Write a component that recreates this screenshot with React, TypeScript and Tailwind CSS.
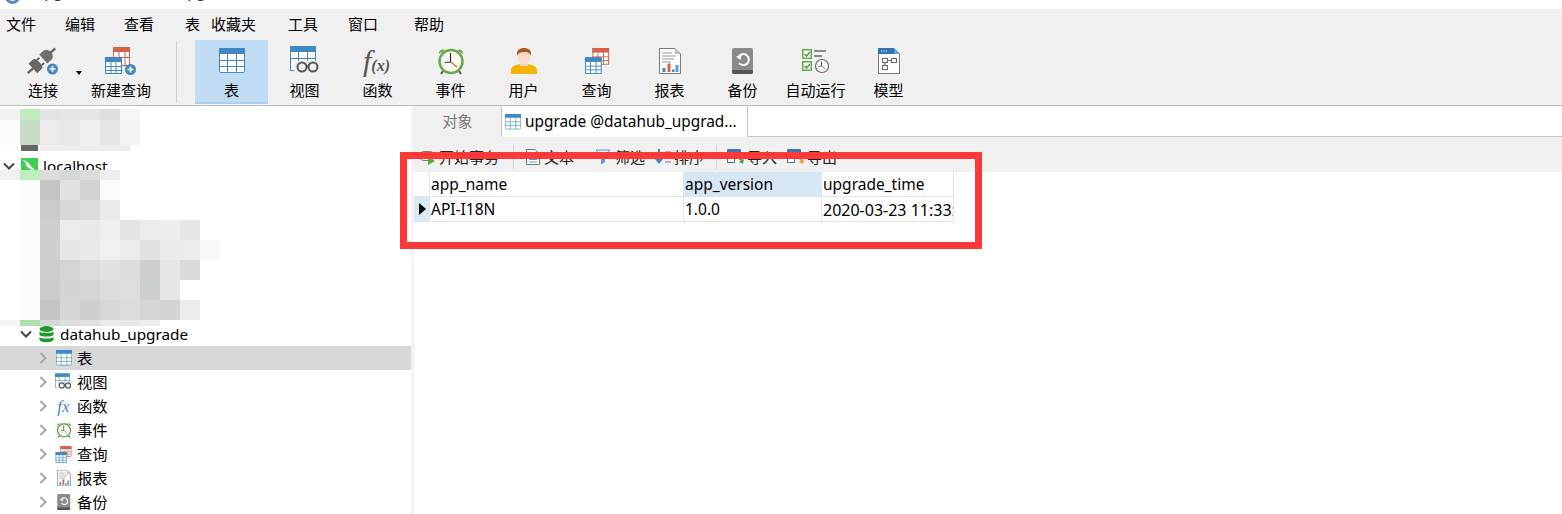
import { ReactNode } from "react";

const BLUE = "#3f87c5";
const RED = "#d9614a";

function TableIcon({ size = 26, color = BLUE }: { size?: number; color?: string }) {
  return (
    <svg width={size} height={size} viewBox="0 0 26 26">
      <rect x="0.5" y="0.5" width="25" height="24" rx="1" fill="#fff" stroke={color} />
      <rect x="0" y="0" width="26" height="6" rx="1" fill={color} />
      <path d="M0 12.5H26M0 18.5H26M8.5 6V25M17.5 6V25" stroke={color} strokeWidth="1" fill="none" />
    </svg>
  );
}

function ViewIcon({ size = 30 }: { size?: number }) {
  return (
    <svg width={size} height={size} viewBox="0 0 30 30">
      <rect x="0.5" y="0.5" width="25" height="24" fill="#fff" stroke={BLUE} />
      <rect x="0" y="0" width="26" height="6" fill={BLUE} />
      <path d="M0 12.5H26M8.5 6V18M17.5 6V18" stroke={BLUE} fill="none" />
      <rect x="4" y="15" width="24" height="12" fill="#f0f0f0" />
      <circle cx="12" cy="21" r="4.5" fill="none" stroke="#555" strokeWidth="2" />
      <circle cx="23" cy="21" r="4.5" fill="none" stroke="#555" strokeWidth="2" />
      <path d="M16.5 20.5H18.5" stroke="#555" strokeWidth="2" />
    </svg>
  );
}

function ClockIcon({ size = 28 }: { size?: number }) {
  return (
    <svg width={size} height={size} viewBox="0 0 28 28">
      <path d="M2 7a4 4 0 0 1 6-4zM26 7a4 4 0 0 0-6-4z" fill="#6aa84f" />
      <path d="M6 24l-2 3M22 24l2 3" stroke="#555" strokeWidth="2" />
      <circle cx="14" cy="14.5" r="11.5" fill="#fbfbf2" stroke="#6aa84f" strokeWidth="2.5" />
      <path d="M13.5 6V15L8 15.5" fill="none" stroke="#333" strokeWidth="1.2" />
      <path d="M14 15L20 20" stroke="#e0604c" strokeWidth="1.2" />
    </svg>
  );
}

function UserIcon() {
  return (
    <svg width="26" height="28" viewBox="0 0 26 28">
      <path d="M0 27v-4c0-4 5-5 9-6l4 2 4-2c4 1 9 2 9 6v4z" fill="#f4b400" />
      <rect x="9" y="14" width="8" height="5" fill="#e6d5c8" />
      <ellipse cx="13" cy="9.5" rx="6.5" ry="8" fill="#fbdcc6" />
      <path d="M6 9C5 3 9 1 13 1s8 2 7 8c-1-3-3-4-5-4-3 0-8 0-9 4z" fill="#a9581f" />
    </svg>
  );
}

function QueryIcon({ size = 26 }: { size?: number }) {
  return (
    <svg width={size} height={size} viewBox="0 0 26 28">
      <rect x="8.5" y="0.5" width="17" height="17" fill="#fff" stroke={RED} />
      <rect x="8" y="0" width="18" height="5" fill={RED} />
      <path d="M8 9.5H26M8 13.5H26M14 5V18M20 5V18" stroke={RED} fill="none" />
      <rect x="0.5" y="10.5" width="17" height="17" fill="#fff" stroke={BLUE} />
      <rect x="0" y="10" width="18" height="5" fill={BLUE} />
      <path d="M0 19.5H18M0 23.5H18M6 15V28M12 15V28" stroke={BLUE} fill="none" />
    </svg>
  );
}

function ReportIcon({ size = 26 }: { size?: number }) {
  return (
    <svg width={size} height={size} viewBox="0 0 22 26">
      <path d="M.5.5H16L21.5 6V25.5H.5z" fill="#fff" stroke="#7a7a7a" />
      <path d="M16 .5V6H21.5z" fill="#bbb" />
      <path d="M3 5H13M3 8H17M3 11H15M3 14H12" stroke="#999" fill="none" />
      <rect x="3.5" y="20" width="3" height="4" fill="#3f87c5" />
      <rect x="8.5" y="15.5" width="3" height="8.5" fill="#e0604c" />
      <rect x="13" y="21.5" width="2.5" height="2.5" fill="#3f87c5" />
      <rect x="16.5" y="17" width="3" height="7" fill="#55a0e0" />
    </svg>
  );
}

function BackupIcon({ size = 26 }: { size?: number }) {
  return (
    <svg width={size} height={size} viewBox="0 0 22 26">
      <rect x="0" y="0" width="21" height="26" rx="2" fill="#8a8a8a" />
      <path d="M0 22H21V24a2 2 0 0 1-2 2H2a2 2 0 0 1-2-2z" fill="#555" />
      <path d="M6.5 9A5.5 5.5 0 1 1 7 15" fill="none" stroke="#fff" strokeWidth="2" />
      <path d="M4 8.5L9.5 7 8.5 12z" fill="#fff" />
    </svg>
  );
}

function AutoRunIcon() {
  return (
    <svg width="28" height="26" viewBox="0 0 28 26">
      <rect x="0.75" y="1.75" width="8.5" height="8.5" fill="#fff" stroke="#6aa84f" strokeWidth="1.5" />
      <rect x="0.75" y="13.75" width="8.5" height="8.5" fill="#fff" stroke="#6aa84f" strokeWidth="1.5" />
      <path d="M2.5 6l2 2 3.5-4M2.5 18l2 2 3.5-4" fill="none" stroke="#5a9a40" strokeWidth="1.6" />
      <path d="M12 3H24M12 8H20" stroke="#8a8a8a" strokeWidth="2" />
      <circle cx="20" cy="18" r="6.5" fill="#fff" stroke="#666" strokeWidth="1.2" />
      <path d="M19.5 13.5V18L16.5 18.5" fill="none" stroke="#555" />
      <path d="M20 18L23 21" stroke="#e0604c" />
    </svg>
  );
}

function ModelIcon() {
  return (
    <svg width="22" height="26" viewBox="0 0 22 26">
      <path d="M.5.5H16L21.5 6V25.5H.5z" fill="#fff" stroke="#7a7a7a" />
      <path d="M0 0H16V6H0z" fill="#2f76b0" />
      <path d="M16 0L22 6H16z" fill="#5aa6e8" />
      <path d="M3 3H4.2M5.4 3H6.6M7.8 3H9" stroke="#fff" />
      <rect x="4.5" y="10.5" width="5" height="4" fill="#fff" stroke="#666" />
      <rect x="13.5" y="10.5" width="5" height="4" fill="#fff" stroke="#666" />
      <rect x="4.5" y="17.5" width="5" height="4" fill="#fff" stroke="#666" />
      <path d="M9.5 12.5H13.5M7 14.5V17.5" stroke="#666" />
    </svg>
  );
}

function PlugIcon() {
  return (
    <svg width="32" height="28" viewBox="0 0 32 28">
      <g transform="rotate(-42 14 14)" fill="#666">
        <rect x="-4" y="13" width="8" height="2.4" />
        <path d="M3 7.5H8a4 4 0 0 1 4 3V17.5a4 4 0 0 1-4 3H3z" />
        <rect x="12" y="9.5" width="3" height="2" />
        <rect x="12" y="16.5" width="3" height="2" />
        <path d="M17 8L23 8a5 5 0 0 1 4 4V16a5 5 0 0 1-4 4H17z" fill="#707070" />
        <rect x="26" y="13" width="7" height="2.4" />
      </g>
      <circle cx="25.5" cy="22" r="5.5" fill="#3f87c5" />
      <path d="M22.5 22H28.5M25.5 19V25" stroke="#fff" strokeWidth="1.6" />
    </svg>
  );
}

function NewQueryIcon() {
  return (
    <svg width="32" height="28" viewBox="0 0 32 28">
      <rect x="8.5" y="0.5" width="16" height="18" fill="#fff" stroke={RED} />
      <rect x="8" y="0" width="17" height="5" rx="1" fill={RED} />
      <path d="M8 10.5H25M14 5V18M20 5V18" stroke={RED} fill="none" />
      <rect x="0.5" y="10.5" width="16" height="16" fill="#fff" stroke={BLUE} />
      <rect x="0" y="10" width="17" height="5" rx="1" fill={BLUE} />
      <path d="M0 19.5H17M0 23.5H17M6 15V27M11 15V27" stroke={BLUE} fill="none" />
      <circle cx="25.5" cy="22.5" r="5.5" fill="#3f87c5" />
      <path d="M22.5 22.5H28.5M25.5 19.5V25.5" stroke="#fff" strokeWidth="1.6" />
    </svg>
  );
}

function FxIcon() {
  return (
    <span className="flex items-baseline -ml-[2px] text-[#555] font-['Liberation_Serif',serif] italic leading-none">
      <span className="text-[30px]">f</span>
      <span className="text-[16px] font-bold">(x)</span>
    </span>
  );
}

function DbIcon() {
  return (
    <svg width="15" height="17" viewBox="0 0 15 17">
      <ellipse cx="7.5" cy="3" rx="7" ry="3" fill="#1a9a2a" />
      <path d="M.5 5.5c2 2 12 2 14 0V9c-2 2-12 2-14 0zM.5 11c2 2 12 2 14 0v3c-2 3-12 3-14 0z" fill="#1a9a2a" />
    </svg>
  );
}

function MysqlIcon() {
  return (
    <svg width="17" height="17" viewBox="0 0 17 17">
      <rect width="17" height="17" fill="#3ed04e" />
      <path d="M2 2c4 1 6 3 8 6l5 6c-3 0-5-3-7-4-2-1-3-2-3-4z" fill="#fff" />
    </svg>
  );
}

function Chevron({ open, dark }: { open?: boolean; dark?: boolean }) {
  return (
    <svg width="12" height="12" viewBox="0 0 12 12">
      <path
        d={open ? "M1 3.5L6 8.5L11 3.5" : "M3.5 1L8.5 6L3.5 11"}
        fill="none"
        stroke={dark ? "#444" : "#a6a6a6"}
        strokeWidth="2"
      />
    </svg>
  );
}

function ToolButton({
  label,
  icon,
  active,
  className = "w-[73px]",
}: {
  label: string;
  icon: ReactNode;
  active?: boolean;
  className?: string;
}) {
  return (
    <div
      className={`${className} h-[64px] flex flex-col items-center ${
        active ? "bg-[#bfdcf2] border-b-2 border-[#a9d1f0]" : ""
      }`}
    >
      <div className="h-[30px] mt-[6px] flex items-center justify-center">{icon}</div>
      <div className="mt-[4px] text-[15px] leading-5 text-black">{label}</div>
    </div>
  );
}

function TreeRow({
  indent,
  label,
  icon,
  open,
  dark,
  active,
}: {
  indent: string;
  label: string;
  icon: ReactNode;
  open?: boolean;
  dark?: boolean;
  active?: boolean;
}) {
  return (
    <div className={`h-6 flex items-center ${indent} ${active ? "bg-[#d8d8d8]" : ""}`}>
      <Chevron open={open} dark={dark} />
      <div className="w-[17px] h-[17px] ml-[6px] flex items-center justify-center shrink-0">{icon}</div>
      <span className="ml-[5px] text-[15.3px] leading-5 text-black">{label}</span>
    </div>
  );
}

function SubTool({ label, icon, className }: { label: string; icon: ReactNode; className: string }) {
  return (
    <div className={`flex items-center ${className}`}>
      {icon}
      <span className="ml-[3px] text-[15px] text-[#222]">{label}</span>
    </div>
  );
}

function TransactionIcon() {
  return (
    <svg width="16" height="16" viewBox="0 0 16 16">
      <rect x="0.5" y="2.5" width="13" height="9" rx="3" fill="#f4f4f4" stroke="#777" />
      <path d="M8 8L15 12 8 16z" fill="#55b030" />
    </svg>
  );
}

function TextIcon() {
  return (
    <svg width="16" height="16" viewBox="0 0 16 16">
      <path d="M1.5.5H10L14.5 5V15.5H1.5z" fill="#fff" stroke="#777" />
      <path d="M4 8H12M4 10.5H12M4 13H12" stroke="#5a9bd5" />
    </svg>
  );
}

function FilterIcon() {
  return (
    <svg width="17" height="16" viewBox="0 0 17 16">
      <path d="M1 1H15L10 6.5H6z" fill="#dcebf7" stroke="#5a9bd5" />
      <path d="M6 7H10V13L6 15.5z" fill="#5a9bd5" />
    </svg>
  );
}

function SortIcon() {
  return (
    <svg width="17" height="16" viewBox="0 0 17 16">
      <path d="M5 0V11" stroke="#3f87c5" strokeWidth="2" />
      <path d="M0 9H10L5 15z" fill="#3f87c5" />
      <path d="M11 3H17M11 8H17M11 13H17" stroke="#777" />
    </svg>
  );
}

function TransferIcon({ color }: { color: string }) {
  return (
    <svg width="17" height="16" viewBox="0 0 17 16">
      <rect x="0" y="0" width="14" height="5" rx="1" fill="#3f78b0" />
      <rect x="0.5" y="5" width="7" height="8.5" fill="#fff" stroke="#3f78b0" />
      <path d="M7 10a5 5 0 0 1 8 2" fill="none" stroke={color} strokeWidth="2.2" />
      <path d="M12 13L17 10 16 15z" fill={color} />
    </svg>
  );
}

const mosaic: [number, number, string[]][] = [
  [109, 11, ["f0f0f0", "c0ecc0", "e3e3e3", "e6e6e4", "e6e6e6", "dedede", "f5f5f5"]],
  [120, 25, ["fcfcfc", "c8dcc8", "ebebeb", "e8e8e8", "eef0f0", "e6e6e6", "f4f4f4"]],
  [170, 10, ["f0f0f0", "bdeebd", "dcdcdc", "d5d8d8", "dcdcdc", "eeeeee"]],
  [180, 20, ["fbfbfb", "c4c4c4", "e2e2e0", "d3d3d3", "f8fafc"]],
  [200, 20, ["fbfbfb", "cbcbcb", "d8d8d8", "dcdcdc", "eaeaea"]],
  [220, 20, ["fbfbfb", "cfcfcf", "ebebe9", "e8eaea", "efefef", "e4e4e2", "ebebeb", "eceef0", "e6e6e4"]],
  [240, 20, ["fcfcfc", "cfcfcf", "e7e7e5", "e8eaea", "f0f0f0", "ebebe9", "e2e2e2", "e8eaec", "ebebeb", "f7f8f8"]],
  [260, 20, ["fcfcfc", "cecece", "d5d5d3", "dadce0", "e2e2e2", "dcdcda", "cfcfcf", "e4e6e8", "dadada"]],
  [280, 20, ["fcfcfc", "cbcbcb", "d4d4d2", "d3d6d6", "dcdcdc", "dedede", "ccd0d0", "e6e6e6"]],
  [300, 20, ["fcfcfc", "c4c4c4", "d6d6d4", "cfcfcf", "d6d8d8", "dcdcdc", "d6d6d6", "d4d4d4", "ececec"]],
  [320, 6, ["f4f4f4", "b0e0b0", "d6d6d6", "dddddd", "e0e0e0", "ebebeb", "e8e8e8", "eeeeee"]],
];

function Mosaic() {
  return (
    <svg className="absolute left-0 top-0" width="220" height="330" viewBox="0 0 220 330">
      {mosaic.map(([y, h, cells], r) => {
        const offset = r >= 3 && r < 10 ? 20 : 0;
        return cells.map((c, i) => (
          <rect key={`${r}-${i}`} x={offset + i * 20} y={y} width="20" height={h} fill={`#${c}`} />
        ));
      })}
      <rect x="40" y="145" width="90" height="6" fill="#eeeeee" />
    </svg>
  );
}

export default function App() {
  const menu: [string, string][] = [
    ["文件", "ml-[6px]"],
    ["编辑", "ml-[29px]"],
    ["查看", "ml-[29px]"],
    ["表", "ml-[31px]"],
    ["收藏夹", "ml-[11px]"],
    ["工具", "ml-[32px]"],
    ["窗口", "ml-[30px]"],
    ["帮助", "ml-[36px]"],
  ];

  return (
    <div className="relative w-[1562px] h-[514px] overflow-hidden bg-white font-['Noto_Sans','Noto_Sans_CJK_SC',sans-serif]">
      {/* title bar, cut off at the top of the shot */}
      <div className="h-[9px] overflow-hidden flex items-end pl-[5px]">
        <div className="w-[15px] h-[15px] rounded-full border-[3px] border-[#5a86c8] shrink-0 mb-[5px]" />
        <span className="ml-[15px] text-[15px] leading-5 mb-[8px] text-[#333] whitespace-nowrap">
          upgrade @datahub_upgrade (localhost) - 表
        </span>
      </div>

      <div className="h-[31px] bg-[#f0f0f0] flex items-center text-[15px] text-black">
        {menu.map(([name, gap]) => (
          <span key={name} className={gap}>
            {name}
          </span>
        ))}
      </div>

      <div className="h-[66px] bg-[#f0f0f0] border-b border-[#bdbdbd] flex items-start">
        <ToolButton className="w-[72px] ml-[7px]" label="连接" icon={<PlugIcon />} />
        <div className="w-0 h-0 mt-[31px] -ml-[3px] border-x-[3px] border-t-[4px] border-x-transparent border-t-black" />
        <ToolButton className="w-[80px] -ml-[1px]" label="新建查询" icon={<NewQueryIcon />} />
        <div className="w-px h-[62px] mt-[1px] ml-[15px] bg-[#d0d0d0]" />
        <div className="ml-[18px] flex">
          <ToolButton active label="表" icon={<TableIcon />} />
          <ToolButton label="视图" icon={<ViewIcon />} />
          <ToolButton label="函数" icon={<FxIcon />} />
          <ToolButton label="事件" icon={<ClockIcon />} />
          <ToolButton label="用户" icon={<UserIcon />} />
          <ToolButton label="查询" icon={<QueryIcon />} />
          <ToolButton label="报表" icon={<ReportIcon />} />
          <ToolButton label="备份" icon={<BackupIcon />} />
          <ToolButton label="自动运行" icon={<AutoRunIcon />} />
          <ToolButton label="模型" icon={<ModelIcon />} />
        </div>
      </div>

      <div className="flex h-[408px]">
        <aside className="relative w-[411px] overflow-hidden bg-white">
          <div className="pt-[24px]">
            <div className="h-6 flex items-center pl-[21px]">
              <div className="w-[17px] h-[17px] bg-[#666]" />
              <span className="ml-[6px] text-[15px]">10</span>
            </div>
            <TreeRow indent="pl-[3px]" label="localhost" open dark icon={<MysqlIcon />} />
            <div className="h-[144px]" />
            <TreeRow indent="pl-[20px]" label="datahub_upgrade" open dark icon={<DbIcon />} />
            <TreeRow indent="pl-[37px]" label="表" active icon={<TableIcon size={16} />} />
            <TreeRow indent="pl-[37px]" label="视图" icon={<ViewIcon size={18} />} />
            <TreeRow
              indent="pl-[37px]"
              label="函数"
              icon={
                <span className="font-['Liberation_Serif',serif] italic text-[17px] leading-none text-[#3f87c5]">
                  fx
                </span>
              }
            />
            <TreeRow indent="pl-[37px]" label="事件" icon={<ClockIcon size={16} />} />
            <TreeRow indent="pl-[37px]" label="查询" icon={<QueryIcon size={17} />} />
            <TreeRow indent="pl-[37px]" label="报表" icon={<ReportIcon size={16} />} />
            <TreeRow indent="pl-[37px]" label="备份" icon={<BackupIcon size={16} />} />
          </div>
          <div className="absolute left-0 -top-[106px]">
            <Mosaic />
          </div>
        </aside>
        <div className="w-[3px] bg-[#f3f3f3]" />

        <main className="flex-1 min-w-0">
          <div className="h-[31px] flex border-b border-[#c4c4c4]">
            <div className="w-[88px] h-[31px] bg-[#f0f0f0] border-r border-[#c4c4c4] flex items-center justify-center text-[15px] text-[#777]">
              对象
            </div>
            <div className="w-[246px] h-[31px] bg-white border-r border-[#c4c4c4] flex items-center pl-[3px] text-[15.4px] text-black whitespace-nowrap">
              <TableIcon size={16} />
              <span className="ml-[4px]">upgrade @datahub_upgrad...</span>
            </div>
          </div>

          <div className="h-[35px] pt-[5px] bg-[#f0f0f0] flex items-center">
            <SubTool className="ml-[6px]" label="开始事务" icon={<TransactionIcon />} />
            <div className="w-px h-[24px] ml-[14px] bg-[#d4d4d4]" />
            <SubTool className="ml-[11px]" label="文本" icon={<TextIcon />} />
            <SubTool className="ml-[21px]" label="筛选" icon={<FilterIcon />} />
            <SubTool className="ml-[9px]" label="排序" icon={<SortIcon />} />
            <div className="w-px h-[24px] ml-[12px] bg-[#d4d4d4]" />
            <SubTool className="ml-[10px]" label="导入" icon={<TransferIcon color="#4fa04f" />} />
            <SubTool className="ml-[10px]" label="导出" icon={<TransferIcon color="#e89a2c" />} />
          </div>

          <div className="grid grid-cols-[15px_254px_138px_133px] w-[540px] text-[15.5px] text-black">
            <div className="h-[25px] border-b border-[#e4e4e4]" />
            <div className="h-[25px] pl-[1px] pt-[2px] flex items-center border-b border-l border-[#e4e4e4]">app_name</div>
            <div className="h-[25px] pl-[1px] pt-[2px] flex items-center border-b border-l border-[#e4e4e4] bg-[#d6e6f5]">
              app_version
            </div>
            <div className="h-[25px] pl-[1px] pt-[2px] flex items-center border-x border-b border-[#e4e4e4]">upgrade_time</div>
            <div className="h-[25px] flex items-center pl-[5px] bg-[#d8e8f5] border-b border-[#e4e4e4]">
              <div className="w-0 h-0 border-y-[6px] border-l-[7px] border-y-transparent border-l-black" />
            </div>
            <div className="h-[25px] pl-[1px] pt-[2px] flex items-center border-b border-l border-[#e4e4e4]">API-I18N</div>
            <div className="h-[25px] pl-[1px] pt-[2px] flex items-center border-b border-l border-[#e4e4e4]">1.0.0</div>
            <div className="h-[25px] pl-[1px] pt-[2px] flex items-center border-x border-b border-[#e4e4e4] overflow-hidden whitespace-nowrap text-[16px]">
              2020-03-23 11:33:
            </div>
          </div>
        </main>
      </div>

      {/* red annotation drawn over the screenshot */}
      <div className="absolute left-[400px] top-[152px] w-[582px] h-[97px] border-[7px] border-[#ff3838]" />
    </div>
  );
}
